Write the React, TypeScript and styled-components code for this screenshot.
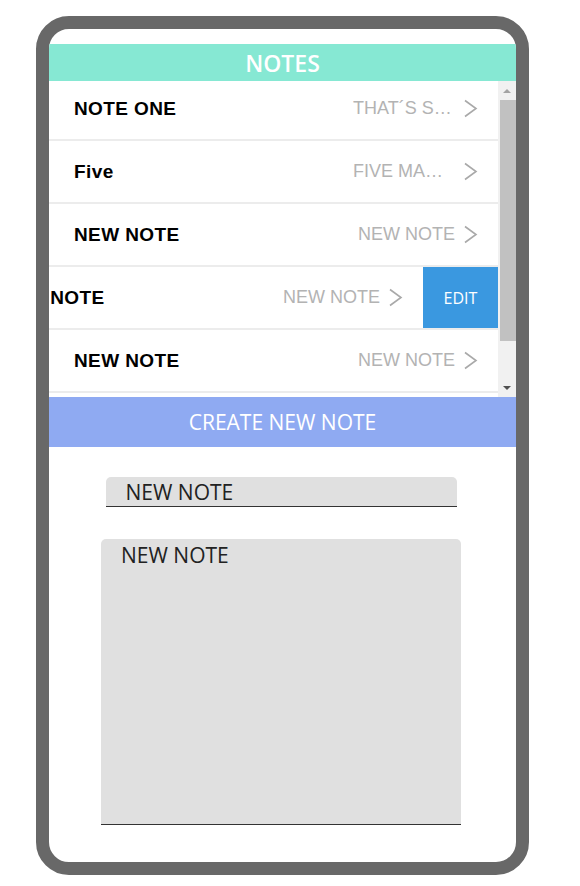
import React from "react"
import styled, { createGlobalStyle } from "styled-components"

const GlobalStyle = createGlobalStyle`
  body {
    margin: 0;
    background: #fff;
    font-family: "Open Sans", sans-serif;
  }
`

const Phone = styled.div`
  box-sizing: border-box;
  width: 493px;
  height: 859px;
  margin: 16px 0 0 36px;
  padding-top: 15px;
  border: 13px solid #686868;
  border-radius: 33px;
  background: #fff;
  overflow: hidden;
  display: flex;
  flex-direction: column;
`

const Header = styled.div`
  height: 37px;
  flex-shrink: 0;
  display: flex;
  align-items: center;
  justify-content: center;
  background: #86e8d3;
  color: #fff;
  font-family: "Open Sans", sans-serif;
  font-size: 23px;
  font-weight: 600;
`

const ListArea = styled.div`
  height: 316px;
  flex-shrink: 0;
  display: flex;
  overflow: hidden;
`

const List = styled.div`
  flex: 1;
  margin-top: -3px;
  display: flex;
  flex-direction: column;
`

const Row = styled.div`
  height: 61px;
  flex-shrink: 0;
  border-bottom: 2px solid #ececec;
  overflow: hidden;
`

const Track = styled.div<{ $shift: number }>`
  display: flex;
  height: 100%;
  transform: translateX(${(p) => -p.$shift}px);
`

const Content = styled.div`
  flex: 0 0 100%;
  box-sizing: border-box;
  display: flex;
  align-items: center;
  padding: 0 20px 0 25px;
  font-family: "Liberation Sans", Arial, sans-serif;
`

const Title = styled.div`
  flex: 1;
  white-space: nowrap;
  font-size: 19px;
  font-weight: 700;
  letter-spacing: 0.4px;
  color: #000;
`

const Preview = styled.div`
  width: 102px;
  text-align: right;
  white-space: nowrap;
  overflow: hidden;
  text-overflow: ellipsis;
  font-size: 18px;
  color: #b3b3b3;
`

const Chevron = styled.svg`
  margin-left: 8px;
  flex-shrink: 0;
`

const EditAction = styled.button`
  flex: 0 0 75px;
  border: none;
  background: #3a98e0;
  color: #fff;
  font-family: "Open Sans", sans-serif;
  font-size: 16px;
  padding: 0;
`

const ScrollTrack = styled.div`
  width: 18px;
  flex-shrink: 0;
  background: #f1f1f1;
  display: flex;
  flex-direction: column;
`

const ScrollArrow = styled.div<{ $down?: boolean }>`
  height: 19px;
  display: flex;
  align-items: center;
  justify-content: center;
  &::after {
    content: "";
    border-left: 4px solid transparent;
    border-right: 4px solid transparent;
    ${(p) =>
      p.$down
        ? "border-top: 4px solid #505050;"
        : "border-bottom: 4px solid #a3a3a3;"}
  }
`

const Thumb = styled.div`
  height: 241px;
  margin-left: 2px;
  background: #c1c1c1;
`

const Spacer = styled.div`
  flex: 1;
`

const CreateButton = styled.button`
  height: 50px;
  flex-shrink: 0;
  border: none;
  background: #8faaf2;
  color: #fff;
  font-family: "Open Sans", sans-serif;
  font-size: 21px;
  padding: 0;
`

const Form = styled.div`
  display: flex;
  flex-direction: column;
  align-items: center;
  padding: 30px 3px 0 0;
  gap: 32px;
`

const TitleInput = styled.input`
  box-sizing: border-box;
  width: 351px;
  height: 30px;
  border: none;
  border-bottom: 1px solid #333;
  border-radius: 5px 5px 0 0;
  background: #e0e0e0;
  padding: 0 20px;
  font-family: "Open Sans", sans-serif;
  font-size: 21px;
  color: #222;
  outline: none;
`

const BodyInput = styled.textarea`
  box-sizing: border-box;
  width: 360px;
  height: 286px;
  border: none;
  border-bottom: 1px solid #333;
  border-radius: 5px 5px 0 0;
  background: #e0e0e0;
  padding: 2px 20px;
  font-family: "Open Sans", sans-serif;
  font-size: 21px;
  color: #222;
  resize: none;
  outline: none;
`

const notes = [
  { title: "NOTE ONE", body: "THAT´S SOMETHING" },
  { title: "Five", body: "FIVE MAMMALS" },
  { title: "NEW NOTE", body: "NEW NOTE" },
  { title: "NEW NOTE", body: "NEW NOTE", swiped: true },
  { title: "NEW NOTE", body: "NEW NOTE" },
  { title: "NEW NOTE", body: "NEW NOTE" }
]

const NoteRow = ({ title, body, swiped }: { title: string; body: string; swiped?: boolean }) => (
  <Row>
    <Track $shift={swiped ? 75 : 0}>
      <Content>
        <Title>{title}</Title>
        <Preview>{body}</Preview>
        <Chevron width="15" height="19" viewBox="0 0 15 19">
          <polyline points="2,1.5 13,9.5 2,17.5" fill="none" stroke="#a9a9a9" strokeWidth="1.6" />
        </Chevron>
      </Content>
      {swiped && <EditAction>EDIT</EditAction>}
    </Track>
  </Row>
)

export default function App() {
  return (
    <>
      <GlobalStyle />
      <Phone>
        <Header>NOTES</Header>
        <ListArea>
          <List>
            {notes.map((n, i) => (
              <NoteRow key={i} title={n.title} body={n.body} swiped={n.swiped} />
            ))}
          </List>
          <ScrollTrack>
            <ScrollArrow />
            <Thumb />
            <Spacer />
            <ScrollArrow $down />
          </ScrollTrack>
        </ListArea>
        <CreateButton>CREATE NEW NOTE</CreateButton>
        <Form>
          <TitleInput defaultValue="NEW NOTE" />
          <BodyInput defaultValue="NEW NOTE" />
        </Form>
      </Phone>
    </>
  )
}
